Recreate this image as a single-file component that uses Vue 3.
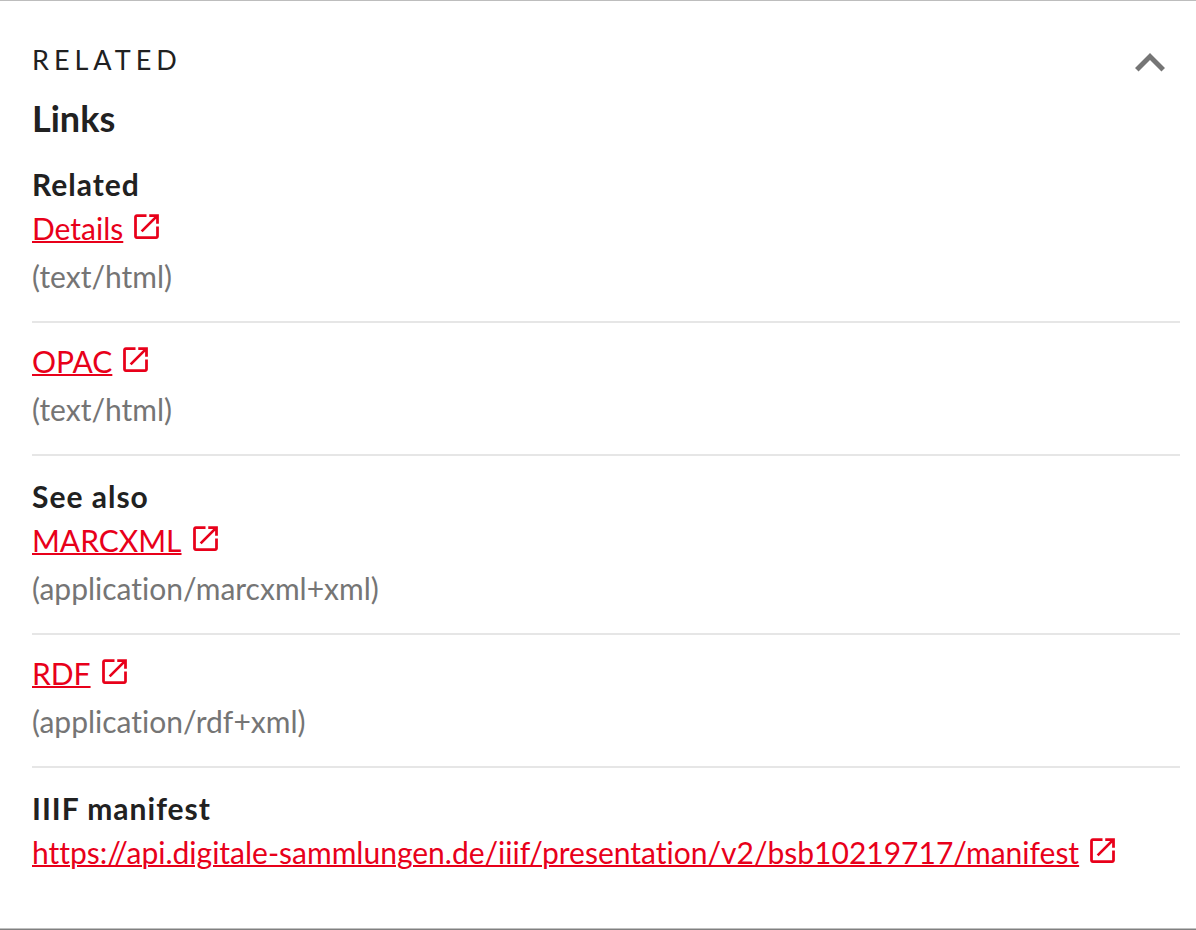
<script setup>
import { ref } from 'vue'

const open = ref(true)
const groups = [
  {
    title: 'Related',
    items: [
      { label: 'Details', format: '(text/html)' },
      { label: 'OPAC', format: '(text/html)' },
    ],
  },
  {
    title: 'See also',
    items: [
      { label: 'MARCXML', format: '(application/marcxml+xml)' },
      { label: 'RDF', format: '(application/rdf+xml)' },
    ],
  },
  {
    title: 'IIIF manifest',
    items: [
      { label: 'https://api.digitale-sammlungen.de/iiif/presentation/v2/bsb10219717/manifest' },
    ],
  },
]
</script>

<template>
  <section class="panel">
    <header class="head">
      <h3 class="overline">Related</h3>
      <button class="toggle" type="button" aria-label="Collapse section" :aria-expanded="open" @click="open = !open">
        <svg viewBox="0 0 24 24" aria-hidden="true"><path d="M12 8l-6 6 1.41 1.41L12 10.83l4.59 4.58L18 14z" /></svg>
      </button>
    </header>
    <div v-if="open">
      <h4 class="title">Links</h4>
      <dl class="groups">
        <div v-for="group in groups" :key="group.title" class="group">
          <dt>{{ group.title }}</dt>
          <dd v-for="item in group.items" :key="item.label" :class="{ ruled: item.format }">
            <div class="line">
              <a href="#">{{ item.label }}</a>
              <svg class="ext" viewBox="0 0 24 24" aria-hidden="true"><path d="M19 19H5V5h7V3H5c-1.11 0-2 .9-2 2v14c0 1.1.89 2 2 2h14c1.1 0 2-.9 2-2v-7h-2v7zM14 3v2h3.59l-9.83 9.83 1.41 1.41L19 6.41V10h2V3h-7z" /></svg>
            </div>
            <div v-if="item.format" class="format">{{ item.format }}</div>
          </dd>
        </div>
      </dl>
    </div>
  </section>
</template>

<style>
body {
  background: #fff;
}
</style>

<style scoped>
.panel {
  box-sizing: border-box;
  min-height: 100vh;
  padding: 32px 16px 32px 32px;
  border-top: 1px solid #bdbdbd;
  border-bottom: 1px solid #808080;
  box-shadow: inset 0 -1px 0 #c0c0c0;
  font-family: Lato, "Liberation Sans", sans-serif;
  font-variant-ligatures: none;
  color: #212121;
}
.head {
  display: flex;
  justify-content: space-between;
  align-items: flex-start;
}
.overline {
  margin: 0;
  font-size: 27px;
  font-weight: 400;
  line-height: 54px;
  letter-spacing: 5px;
  text-transform: uppercase;
}
.toggle {
  display: flex;
  padding: 0;
  border: 0;
  background: none;
  cursor: pointer;
}
.toggle svg {
  width: 60px;
  height: 60px;
  fill: #757575;
}
.title {
  margin: 0;
  font-size: 36px;
  font-weight: 700;
  line-height: 50px;
}
.groups {
  margin: 15px 0 0;
}
.group {
  padding-top: 6px;
}
dt {
  font-size: 30px;
  font-weight: 700;
  line-height: 40px;
  letter-spacing: 1px;
}
dd {
  margin: 0;
  font-size: 30px;
  line-height: 48px;
}
.ruled {
  padding-bottom: 21px;
  margin-bottom: 14px;
  border-bottom: 2px solid #e6e6e6;
}
.line {
  display: flex;
  align-items: center;
  gap: 7px;
}
a {
  color: #e8001a;
  text-decoration-thickness: 2px;
}
.ext {
  width: 33px;
  height: 33px;
  margin-bottom: 4px;
  fill: #e8001a;
}
.format {
  color: #757575;
}
</style>
